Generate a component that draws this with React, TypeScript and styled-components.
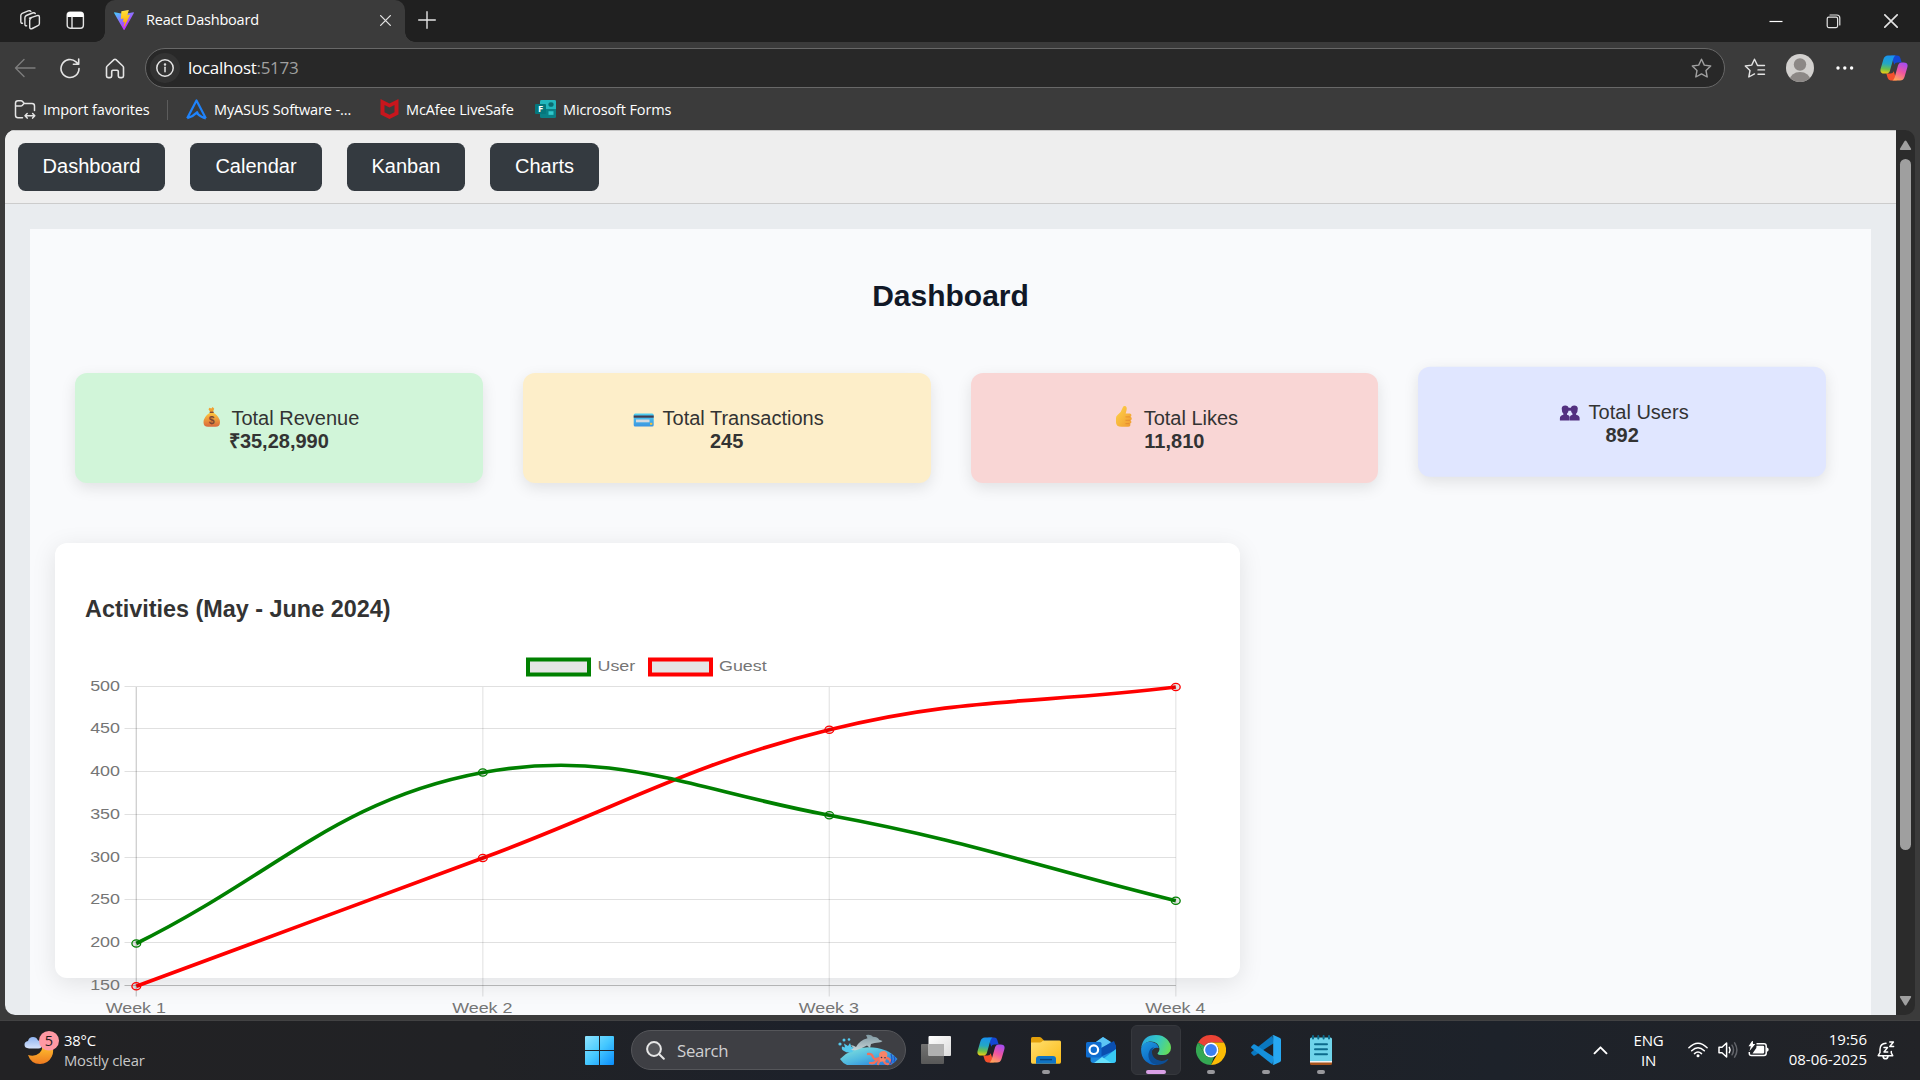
import React from "react";
import styled, { createGlobalStyle } from "styled-components";

const uiFont = `"Segoe UI", "Open Sans", "Noto Sans", sans-serif`;
const pageFont = `Arial, "Liberation Sans", sans-serif`;

const GlobalStyle = createGlobalStyle`
  *, *::before, *::after { box-sizing: border-box; }
  body { margin: 0; background: #3b3b3b; overflow: hidden; }
  svg { display: block; flex: none; }
`;

/* ---------- browser chrome ---------- */

const Screen = styled.div`
  width: 1920px;
  height: 1080px;
  display: flex;
  flex-direction: column;
  background: #3b3b3b;
  overflow: hidden;
  font-family: ${uiFont};
  color: #fff;
`;

const TitleBar = styled.div`
  height: 42px;
  flex: none;
  display: flex;
  background: #202020;
`;

const TitleTools = styled.div`
  width: 105px;
  padding: 10px 0 0 20px;
  display: flex;
  gap: 25px;
`;

const Tab = styled.div`
  position: relative;
  width: 300px;
  padding: 0 14px 2px 9px;
  display: flex;
  align-items: center;
  background: #3b3b3b;
  border-radius: 10px 10px 0 0;

  &::before,
  &::after {
    content: "";
    position: absolute;
    bottom: 0;
    width: 10px;
    height: 10px;
  }
  &::before {
    left: -10px;
    background: radial-gradient(circle at 0 0, transparent 9.5px, #3b3b3b 10px);
  }
  &::after {
    right: -10px;
    background: radial-gradient(circle at 100% 0, transparent 9.5px, #3b3b3b 10px);
  }
`;

const TabTitle = styled.span`
  flex: 1;
  padding-left: 12px;
  font-size: 14.5px;
  line-height: 20px;
  letter-spacing: -0.2px;
  margin-top: -1px;
`;

const NewTab = styled.div`
  padding: 11px 0 0 13px;
`;

const WindowControls = styled.div`
  margin-left: auto;
  padding: 14px 22px 0 0;
  display: flex;
  gap: 43px;
`;

const Toolbar = styled.div`
  height: 52px;
  flex: none;
  display: flex;
  align-items: center;
  padding: 0 12px 0 14px;
`;

const NavIcons = styled.div`
  width: 131px;
  display: flex;
  gap: 24px;
`;

const AddressBar = styled.div`
  width: 1580px;
  height: 40px;
  display: flex;
  align-items: center;
  padding: 0 12px 0 4px;
  background: #282828;
  border: 1.25px solid #686868;
  border-radius: 20px;
`;

const InfoBadge = styled.div`
  width: 30px;
  height: 30px;
  display: grid;
  place-items: center;
  border-radius: 50%;
  background: #333;
`;

const Address = styled.span`
  flex: 1;
  padding-left: 8px;
  font-size: 17px;
  line-height: 24px;
  letter-spacing: -0.3px;
`;

const Port = styled.span`
  color: #a0a0a0;
`;

const ToolbarActions = styled.div`
  flex: 1;
  display: flex;
  align-items: center;
  padding-left: 19px;
  gap: 20px;

  & > :last-child {
    margin-left: auto;
  }
`;

const Bookmarks = styled.div`
  height: 36px;
  flex: none;
  display: flex;
  padding: 3px 0 0 14px;
`;

const Bookmark = styled.div<{ $width: number }>`
  width: ${(p) => p.$width}px;
  height: 24px;
  display: flex;
  align-items: center;
  gap: 7px;
  font-size: 14.5px;
  letter-spacing: -0.13px;
  white-space: nowrap;
`;

const Separator = styled.div`
  width: 1px;
  height: 20px;
  margin: 3px 18px 0 0;
  background: #5c5c5c;
`;

/* ---------- page ---------- */

const Viewport = styled.div`
  height: 885px;
  flex: none;
  margin: 0 5px;
  display: flex;
  border-radius: 10px;
  overflow: hidden;
  background: #2b2b2b;
`;

const Page = styled.div`
  width: 1891px;
  height: 885px;
  overflow: hidden;
  background: #e9ecef;
  color: #333;
  font-family: ${pageFont};
`;

const NavBar = styled.nav`
  height: 74px;
  display: flex;
  gap: 25px;
  padding: 12px 13px;
  background: #eee;
  border-top: 1px solid #c8c8c8;
  border-bottom: 1px solid #ccc;
`;

const NavButton = styled.button<{ $width: number }>`
  width: ${(p) => p.$width}px;
  height: 48px;
  padding: 0 0 1px;
  border: 0;
  border-radius: 7.5px;
  background: #343a40;
  color: #fff;
  font-family: ${pageFont};
  font-size: 20px;
`;

const Panel = styled.main`
  margin: 25px;
  height: 1100px;
  padding: 50px 25px 0;
  background: #f9fafc;
`;

const PageTitle = styled.h1`
  margin: 0 0 60px;
  font-size: 30px;
  line-height: 34px;
  text-align: center;
  color: #111827;
`;

const Stats = styled.section`
  display: grid;
  grid-template-columns: repeat(4, 1fr);
  gap: 40px;
  padding: 0 20px;
  margin-bottom: 60px;
`;

const StatCard = styled.div<{ $tint: string; $raised?: boolean }>`
  height: 110px;
  padding: 30px;
  border-radius: 12px;
  background: ${(p) => p.$tint};
  box-shadow: 0 5px 15px rgba(0, 0, 0, 0.1);
  transform: ${(p) => (p.$raised ? "translateY(-6.25px)" : "none")};
  font-size: 20px;
  line-height: 23px;
  text-align: center;
`;

const StatLabel = styled.div`
  height: 27px;
  display: flex;
  justify-content: center;
  align-items: flex-end;
  gap: 5.5px;

  svg {
    margin-bottom: -2px;
  }
`;

const StatValue = styled.strong`
  display: block;
`;

const ChartCard = styled.section`
  width: 1185px;
  height: 435px;
  padding: 53px 30px 0;
  border-radius: 12px;
  background: #fff;
  box-shadow: 0 5px 25px rgba(0, 0, 0, 0.1);
`;

const ChartTitle = styled.h3`
  margin: 0 0 23px;
  font-size: 23.4px;
  line-height: 26px;
`;

const Scrollbar = styled.div`
  width: 19px;
  height: 885px;
  display: flex;
  flex-direction: column;
  align-items: center;
  padding: 10px 0 9px;
`;

const Thumb = styled.div`
  width: 11px;
  height: 691px;
  margin: 9px 0 auto;
  border-radius: 6px;
  background: #9f9f9f;
`;

/* ---------- taskbar ---------- */

const Taskbar = styled.footer`
  height: 60px;
  flex: none;
  margin-top: auto;
  padding-bottom: 1px;
  display: flex;
  align-items: center;
  border-top: 1px solid #424243;
  background: linear-gradient(90deg, #222224 0%, #212225 25%, #1d212a 42%, #1f2126 60%, #1d222a 78%, #222327 100%);
`;

const Weather = styled.div`
  width: 585px;
  padding-left: 24px;
  display: flex;
  align-items: center;
`;

const WeatherText = styled.div`
  padding-left: 3px;
  margin-top: -1px;
  font-size: 14.8px;
  line-height: 20px;
  letter-spacing: -0.2px;
`;

const Muted = styled.div`
  color: #c8c8c8;
`;

const SearchBox = styled.div`
  width: 275px;
  height: 40px;
  margin: 0 5px 0 17px;
  padding: 0 7px 0 14px;
  display: flex;
  align-items: center;
  border-radius: 20px;
  border: 1px solid #55565a;
  background: #3e3f44;
`;

const SearchText = styled.span`
  flex: 1;
  padding-left: 12px;
  color: #d0d0d2;
  font-size: 16.8px;
  letter-spacing: -0.3px;
`;

const Apps = styled.div`
  display: flex;
  gap: 5px;
`;

const AppSlot = styled.div<{ $active?: boolean }>`
  position: relative;
  width: 50px;
  height: 50px;
  display: grid;
  place-items: center;
  border-radius: 6px;
  border: 1px solid ${(p) => (p.$active ? "#36383d" : "transparent")};
  background: ${(p) => (p.$active ? "#2d2f35" : "transparent")};
`;

const Running = styled.span<{ $active?: boolean }>`
  position: absolute;
  left: 50%;
  bottom: 0;
  width: ${(p) => (p.$active ? 20 : 8)}px;
  height: 4px;
  border-radius: 2px;
  transform: translateX(-50%);
  background: ${(p) => (p.$active ? "#d9a0e6" : "#98989c")};
`;

const Tray = styled.div`
  margin-left: auto;
  padding-right: 25px;
  display: flex;
  align-items: center;
  font-size: 15px;
  line-height: 20px;
`;

const Language = styled.div`
  width: 80px;
  margin-top: -1px;
  padding-left: 1px;
  text-align: center;
  letter-spacing: -0.2px;
`;

const TrayIcons = styled.div`
  display: flex;
  gap: 10px;
  align-items: center;
`;

const Clock = styled.div`
  width: 98px;
  margin: -2px 10px 0 0;
  text-align: right;
`;

/* ---------- icons ---------- */

const line = { fill: "none", stroke: "#e4e4e4", strokeWidth: 1.4, strokeLinecap: "round", strokeLinejoin: "round" } as const;

const WorkspacesIcon = () => (
  <svg width="21" height="20" viewBox="0 0 21 20" {...line}>
    <path d="M9.5 8.2 17 5.6q2.4-.7 2.4 1.7v6.2q0 1.6-1.5 2.2l-5.600 2.8q-2.600 1.100-2.600-1.400v-6.500q0-1.700 1.400-2.400" />
    <path d="M6.600 15.800q-1.700.300-1.700-1.800V7.800q0-1.600 1.400-2.300L12.500 3q2-.800 2.800.600" />
    <path d="M2.500 13.300Q.800 13.500.800 11.500V5.600q0-1.600 1.400-2.300L8.200.900q2-.600 2.700.600" />
  </svg>
);

const TabActionsIcon = () => (
  <svg width="19" height="20" viewBox="0 0 19 20">
    <rect x="1.200" y="2.200" width="16.200" height="16" rx="3" {...line} />
    <path d="M1.200 7V5q0-3 3-3h10.200q3 0 3 3v2z" fill="#fff" />
    <path d="M6 7v11" {...line} />
  </svg>
);

const ViteIcon = () => (
  <svg width="20" height="20" viewBox="0 0 256 257">
    <defs>
      <linearGradient id="vite-a" x1="0" y1="0" x2=".58" y2=".79">
        <stop stopColor="#41d1ff" />
        <stop offset="1" stopColor="#bd34fe" />
      </linearGradient>
      <linearGradient id="vite-b" x1=".43" y1=".02" x2=".5" y2=".89">
        <stop stopColor="#ffea83" />
        <stop offset=".08" stopColor="#ffdd35" />
        <stop offset="1" stopColor="#ffa800" />
      </linearGradient>
    </defs>
    <path fill="url(#vite-a)" d="M255.153 37.938 134.897 252.976c-2.483 4.440-8.862 4.466-11.382.048L.875 37.958c-2.746-4.814 1.371-10.646 6.827-9.670l120.385 21.517a6.537 6.537 0 0 0 2.322-.004l117.867-21.483c5.438-.991 9.574 4.796 6.877 9.620Z" />
    <path fill="url(#vite-b)" d="M185.432.063 96.440 17.501a3.268 3.268 0 0 0-2.634 3.014l-5.474 92.456a3.268 3.268 0 0 0 3.997 3.378l24.777-5.718c2.318-.535 4.413 1.507 3.936 3.838l-7.361 36.047c-.495 2.426 1.782 4.500 4.151 3.780l15.304-4.649c2.372-.720 4.652 1.360 4.150 3.788l-11.698 56.621c-.732 3.542 3.979 5.473 5.943 2.437l1.313-2.028 72.516-144.720c1.215-2.423-.880-5.186-3.540-4.672l-25.505 4.922c-2.396.462-4.435-1.770-3.759-4.114l16.646-57.705c.677-2.350-1.370-4.583-3.769-4.113Z" />
  </svg>
);

const CloseIcon = ({ size = 11 }: { size?: number }) => (
  <svg width={size} height={size} viewBox="0 0 12 12" {...line}>
    <path d="M.7.7 11.300 11.300M11.300.7.7 11.300" />
  </svg>
);

const PlusIcon = () => (
  <svg width="18" height="18" viewBox="0 0 18 18" {...line}>
    <path d="M9 .7v16.600M.7 9h16.600" />
  </svg>
);

const MinimizeIcon = () => (
  <svg width="14" height="15" viewBox="0 0 14 15">
    <path d="M.5 7.500h13" stroke="#fff" strokeWidth="1.200" />
  </svg>
);

const RestoreIcon = () => (
  <svg width="15" height="15" viewBox="0 0 15 15" {...line} strokeWidth="1.200">
    <rect x="1.200" y="3.200" width="10.400" height="10.400" rx="1.500" />
    <path d="M4 1h6.800q3 0 3 3v7" />
  </svg>
);

const BackIcon = () => (
  <svg width="22" height="20" viewBox="0 0 22 20" {...line} stroke="#7d7d7d">
    <path d="M21 10H1.500M10 1.500 1.500 10l8.500 8.500" />
  </svg>
);

const ReloadIcon = () => (
  <svg width="21" height="21" viewBox="0.5 0 21 21" {...line} strokeWidth="1.600">
    <path d="M19.500 10.500a9 9 0 1 1-3-6.700l2.500 2.400M19.200 1v5.300h-5.300" />
  </svg>
);

const HomeIcon = () => (
  <svg width="20" height="21" viewBox="0 0 20 21" {...line} strokeWidth="1.600">
    <path d="M1.500 9.500q0-.9.700-1.500L9 1.700q1-.9 2 0L17.800 8q.7.600.7 1.500V18q0 1.600-1.600 1.600h-2q-1.600 0-1.600-1.600v-4.500q0-1.200-1.200-1.200H7.900q-1.200 0-1.200 1.200V18q0 1.600-1.600 1.600h-2Q1.500 19.600 1.500 18z" />
  </svg>
);

const InfoIcon = () => (
  <svg width="18" height="18" viewBox="0 0 18 18" {...line} strokeWidth="1.500">
    <circle cx="9" cy="9" r="8.200" />
    <path d="M9 8.300v4.400" />
    <circle cx="9" cy="5.500" r=".5" fill="#fff" />
  </svg>
);

const StarIcon = () => (
  <svg width="21" height="21" viewBox="0 0 21 21" {...line} stroke="#a0a0a0">
    <path d="m10.500 1.200 2.800 5.900 6.400.9-4.700 4.500 1.200 6.500-5.700-3.100L4.800 19 6 12.500 1.300 8l6.400-.9z" />
  </svg>
);

const FavoritesIcon = () => (
  <svg width="22" height="21" viewBox="0 0 22 21" {...line}>
    <path d="M20.500 7.500h-7L10.500 1.200 7.700 7.100l-6.400.9L6 12.500 4.800 19l5.700-3.100M14 11.900h6.500M14 16.200h6.500" />
  </svg>
);

const Avatar = () => (
  <svg width="28" height="28" viewBox="0 0 28 28">
    <defs>
      <clipPath id="avatar-clip"><circle cx="14" cy="14" r="14" /></clipPath>
    </defs>
    <g clipPath="url(#avatar-clip)">
      <path fill="#d2d0ce" d="M0 0h28v28H0z" />
      <circle cx="14" cy="10.500" r="6.200" fill="#8c8886" />
      <ellipse cx="14" cy="26.500" rx="10.500" ry="8.500" fill="#8c8886" />
    </g>
  </svg>
);

const MoreIcon = () => (
  <svg width="22" height="6" viewBox="-2 0 22 6" fill="#fff">
    <circle cx="2" cy="3" r="1.700" /><circle cx="8.800" cy="3" r="1.700" /><circle cx="15.600" cy="3" r="1.700" />
  </svg>
);

const CopilotIcon = ({ id }: { id: string }) => (
  <svg width="28" height="26" viewBox="0 0 30 28">
    <defs>
      <linearGradient id={`${id}-a`} x1=".4" y1="0" x2=".3" y2="1">
        <stop stopColor="#1893f0" />
        <stop offset=".45" stopColor="#24a7c4" />
        <stop offset=".75" stopColor="#6cc04a" />
        <stop offset="1" stopColor="#f5cf12" />
      </linearGradient>
      <linearGradient id={`${id}-b`} x1=".7" y1="0" x2=".3" y2="1">
        <stop stopColor="#a54cf0" />
        <stop offset=".5" stopColor="#f0559f" />
        <stop offset="1" stopColor="#ffa55c" />
      </linearGradient>
    </defs>
    <path fill="#1447d4" d="M12 .5h6.500q2.500 0 3.300 2.600L23.300 8H18.500q-2.400 0-3.200 2.400z" />
    <path fill="#f4512d" d="M18 27.500h-6.500q-2.500 0-3.300-2.600L6.700 20h4.800q2.400 0 3.200-2.400z" />
    <path fill={`url(#${id}-a)`} d="M8.500.5h8.300q-1.700.500-2.400 3l-3.700 13.100Q9.700 20 6.500 20H4.600Q-.800 20 .7 14.500L3.700 4.300Q4.900.5 8.500.5z" />
    <path fill={`url(#${id}-b)`} d="M21.500 27.500h-8.300q1.700-.500 2.400-3l3.700-13.100Q20.300 8 23.500 8h1.900q5.400 0 3.900 5.500l-3 10.200Q25.100 27.500 21.500 27.500z" />
  </svg>
);

const ImportIcon = () => (
  <svg width="22" height="21" viewBox="0 0 22 21" {...line} strokeWidth="1.500">
    <path d="M8.500 18.700H4q-2.500 0-2.500-2.500V4.300q0-2.500 2.500-2.500h3q1 0 1.600.700l1.700 2H18q2.500 0 2.500 2.500v4.500M1.500 7h5.200q1 0 1.700-.800l1.600-1.700" />
    <path d="M11 16.800h9.800M13.200 14.500 11 16.800l2.200 2.300M18.600 14.500l2.200 2.300-2.200 2.300" />
  </svg>
);

const AsusIcon = () => (
  <svg width="21" height="21" viewBox="0 0 21 21">
    <path d="M1.200 19.300 10.500 1.500l9.300 17.800M1.200 19.300q5.800-1.800 10.800-6.700M19.800 19.300q-4.500-.800-9.500-5.700" fill="none" stroke="#1f83fb" strokeWidth="2.200" strokeLinejoin="round" />
  </svg>
);

const McAfeeIcon = () => (
  <svg width="20" height="20" viewBox="-1 0 20 20">
    <path fill="#c8161d" d="M.5 0 9.500 4.500 18.500 0v15.500L9.500 20l-9-4.500zM4.500 6v7.200l5 2.600 5-2.600V6l-5 2.600z" />
  </svg>
);

const FormsIcon = () => (
  <svg width="21" height="18" viewBox="0 0 21 20" preserveAspectRatio="none">
    <path fill="#23b7bd" d="M5 1.500Q5 0 6.500 0h13Q21 0 21 1.500V10H5z" />
    <path fill="#0a8086" d="M5 10h16v8.500q0 1.500-1.500 1.500h-13Q5 20 5 18.500z" />
    <circle cx="16" cy="5" r="2.600" fill="#0a6c70" /><path fill="#31c8cc" d="M13.500 12.500h5v4h-5z" />
    <rect y="4.500" width="11" height="11" rx="1" fill="#05777c" />
    <text x="5.500" y="13.400" fontSize="9.500" fontWeight="700" fill="#fff" textAnchor="middle" fontFamily="Open Sans, sans-serif">F</text>
  </svg>
);

/* stat icons share a 27.5px advance so that labels align the way emoji do */
const MoneyBag = () => (
  <svg width="27.500" height="27" viewBox="0 0 27.500 27">
    <defs>
      <linearGradient id="bag" x1="0" y1="0" x2="0" y2="1">
        <stop stopColor="#ffc83d" /><stop offset="1" stopColor="#d9683c" />
      </linearGradient>
    </defs>
    <path fill="#f0a030" d="m10.500 4.300 1-1.500 1.800.700L14.700 2l1.500 1.800-1.300 3.200h-2.600z" />
    <path fill="url(#bag)" d="M12 7.500h3.300q6.700 4.500 6.700 9.800 0 4.500-4.500 4.500h-7.500q-4.500 0-4.500-4.500 0-5.300 6.500-9.800z" />
    <path stroke="#7d4533" strokeWidth="1.300" d="M11.700 7.300h4" />
    <text x="13.700" y="18.800" fontSize="10.500" fontWeight="700" textAnchor="middle" fill="#7d4533">$</text>
  </svg>
);

const CreditCard = () => (
  <svg width="27.500" height="27" viewBox="0 0 27.500 27">
    <defs>
      <linearGradient id="card" x1="0" y1="0" x2="0" y2="1">
        <stop stopColor="#4fd0f2" /><stop offset="1" stopColor="#3a93e0" />
      </linearGradient>
    </defs>
    <rect x="3.700" y="8.500" width="20" height="13" rx="1.500" fill="url(#card)" />
    <path fill="#433b4f" d="M3.700 10.500h20v2.200h-20z" />
    <path fill="#d5d9e0" d="M6 14.500h13.500v2.800H6z" />
    <path fill="#f3c13a" d="M20 17.800h2.300v2H20z" />
  </svg>
);

const ThumbsUp = () => (
  <svg width="27.500" height="27" viewBox="1 0.5 27.500 27">
    <defs>
      <linearGradient id="thumb" x1="0" y1="0" x2="1" y2="1">
        <stop stopColor="#ffd54a" /><stop offset="1" stopColor="#f09a30" />
      </linearGradient>
    </defs>
    <path fill="url(#thumb)" d="M6 13.500q0-1.700 1.800-3.200 3.700-3 4.600-6.600.6-2.200 2.300-2.100 2.600.3 1.900 4l-.9 3.400h4.100q1.600.1 1.600 1.600t-1 1.700q1.500.4 1.400 1.900-.1 1.400-1.400 1.700 1.200.5 1 1.800-.200 1.300-1.500 1.500.8.500.5 1.500-.5 1.600-2.400 1.600h-6.500Q6 22.300 6 17.700z" />
    <path stroke="#e0822e" strokeWidth=".7" fill="none" d="M15.500 12.400h4.800M15.500 15.800h4.800M15.500 19.100h4" />
  </svg>
);

const Users = () => (
  <svg width="27.500" height="27" viewBox="0 -0.5 27.500 27" fill="#533080">
    <path d="M5.700 9.200q.2-2.900 3.500-2.900t3.500 2.900q0 3.800-1.700 5.200v1q2.400.4 2.600 2.200v3.700H3.900v-2.500q0-2.800 3.500-3.400v-1Q5.700 13 5.700 9.200zM14.800 9.200q.2-2.900 3.500-2.900t3.500 2.900q0 3.800-1.700 5.200v1q3.500.6 3.500 3.400v2.500h-9.700v-3.700q.2-1.800 2.600-2.200v-1q-1.700-1.400-1.700-5.200z" />
    <path d="M12 8.500h3.400v3H12z" />
  </svg>
);

const ArrowUp = () => (
  <svg width="13" height="10" viewBox="0 0 13 10"><path fill="#9f9f9f" d="M.8 9 5.600 1q.9-1 1.800 0l4.800 8q0 .9-.9.900H1.700Q.8 9.900.8 9z" /></svg>
);

const ArrowDown = () => (
  <svg width="13" height="10" viewBox="0 0 13 10"><path fill="#9f9f9f" d="M.8 1 5.600 9q.9 1 1.800 0l4.800-8q0-.9-.9-.900H1.700Q.8.100.8 1z" /></svg>
);

const WeatherIcon = () => (
  <svg width="37" height="38" viewBox="0 0 37 38">
    <defs>
      <linearGradient id="moon" x1="0" y1="0" x2="0" y2="1">
        <stop stopColor="#ffc02e" /><stop offset="1" stopColor="#ee7a20" />
      </linearGradient>
      <linearGradient id="cloud" x1="0" y1="0" x2="0" y2="1">
        <stop stopColor="#8fb4f0" /><stop offset="1" stopColor="#d6e2fa" />
      </linearGradient>
    </defs>
    <path fill="url(#moon)" d="M4 24q7 2 11.500-2 3-3 3-7L28 15q2.500 5.500-.3 10.800Q24 33 16 33 7 33 4 24z" />
    <path fill="url(#cloud)" d="M5 17.500q-4.500-.3-4.500-3.700 0-3.200 3.500-3.700Q5 6 9 6q3.500 0 5 3.400 4 0 4 4 0 4.100-3.500 4.100z" />
    <ellipse cx="25" cy="9.800" rx="10" ry="9.800" fill="#ff99a4" />
    <text x="25" y="15" fontSize="14.500" textAnchor="middle" fill="#1c1c1c" fontFamily="Open Sans, sans-serif">5</text>
  </svg>
);

const WindowsLogo = () => (
  <svg width="29" height="29" viewBox="0 0 29 29">
    <defs>
      <linearGradient id="win" gradientUnits="userSpaceOnUse" x1="0" y1="0" x2="29" y2="29">
        <stop stopColor="#8fe4ff" /><stop offset=".5" stopColor="#45c8ff" /><stop offset="1" stopColor="#0a8cfb" />
      </linearGradient>
    </defs>
    <path fill="url(#win)" d="M1 0h13v14H0V1q0-1 1-1zM15 0h13q1 0 1 1v13H15zM0 15h14v14H1q-1 0-1-1zM15 15h14v13q0 1-1 1H15z" />
  </svg>
);

const SearchIcon = () => (
  <svg width="19" height="19" viewBox="0 0 19 19" fill="none" stroke="#e6e6e6" strokeWidth="2" strokeLinecap="round">
    <circle cx="8" cy="8" r="6.900" fill="#55565a" /><path d="m13 13 4.800 4.800" />
  </svg>
);

const DolphinArt = () => (
  <svg width="60" height="32" viewBox="0 0 60 32">
    <defs>
      <linearGradient id="sea" x1="0" y1="0" x2="1" y2="1">
        <stop stopColor="#8ae8dc" /><stop offset=".5" stopColor="#4fb8e0" /><stop offset="1" stopColor="#1d6fdc" />
      </linearGradient>
      <linearGradient id="dolphin" x1="0" y1="0" x2="0" y2="1">
        <stop stopColor="#7f97a0" /><stop offset="1" stopColor="#c4d2d6" />
      </linearGradient>
    </defs>
    <path fill="url(#sea)" d="M2 25Q13 13.500 30 13.200 49 13 59.500 25q-2.500 3.800-6.500 6H9q-4.500-2-7-6z" />
    <path fill="#54c8ec" d="M6 17q-3-1.500-2-4.500l3 1-1-4 4 2.500L12 9l1.500 4 3 .5-2 4.500q-5 1.500-8.500-1z" />
    <circle cx="2" cy="10" r="1.600" fill="#54c8ec" /><circle cx="6" cy="6" r="1.500" fill="#54c8ec" /><circle cx="11" cy="5.500" r="1.300" fill="#54c8ec" />
    <path fill="url(#dolphin)" d="M13 11q3 .3 5 2 3.500-6.500 11.500-8.700L28 1q5-1 7 1.800 4.700.2 6.200 3l3.300 1.200q-1 1.500-4 1.400-4 .1-7.500 1.600l-1 4-3-2.600q-5.500 3-10.500 4.600-3 .8-5.500-.300 2-1 2.700-1.900Q13.500 12.500 13 11z" />
    <path fill="none" stroke="#f2705c" strokeWidth="2.300" strokeLinecap="round" d="M30 20q4-.5 5 3t6 1M32 29q4 1 6-2t5-1M40 30q1-4 4-4M46 26q0 4 4 4M48 24q4 0 5 5" />
    <path fill="#f98468" d="M41 20q1.500-3.500 5.500-3 4 1.500 2.500 5.500l-2 5h-5z" />
    <circle cx="43.500" cy="23.500" r=".8" fill="#31324a" /><circle cx="47" cy="23.800" r=".8" fill="#31324a" />
    <path fill="none" stroke="#1f54c8" strokeWidth="1.300" d="M53 20q2 5-.5 10M56 22q1.500 3 0 6" />
  </svg>
);

const TaskViewIcon = () => (
  <svg width="30" height="30" viewBox="0 0 30 30">
    <defs>
      <linearGradient id="tv" x1="0" y1="0" x2="1" y2="1"><stop stopColor="#fff" /><stop offset="1" stopColor="#dcdcdc" /></linearGradient>
      <linearGradient id="tv2" x1="0" y1="0" x2="0" y2="1"><stop stopColor="#727272" /><stop offset="1" stopColor="#585858" /></linearGradient>
    </defs>
    <rect y="9" width="23" height="20" rx="1" fill="url(#tv2)" />
    <rect x="7.500" y="1" width="22.500" height="20" rx="1" fill="url(#tv)" />
    <path fill="#b1b1b1" d="M7.500 9H23v12H8.500q-1 0-1-1z" />
  </svg>
);

const ExplorerIcon = () => (
  <svg width="30" height="30" viewBox="0 0 30 30">
    <defs>
      <linearGradient id="fold" x1="0" y1="0" x2="1" y2="1"><stop stopColor="#ffdf70" /><stop offset="1" stopColor="#fbbb16" /></linearGradient>
    </defs>
    <path fill="#e2a00b" d="M0 3.500Q0 2 1.500 2h7q1 0 1.800.8L13 5.500 10 12H0z" />
    <path fill="url(#fold)" d="M0 7.500h9q1 0 1.800-.8l.700-.700q.7-.6 1.500-.6h15.500Q30 5.400 30 7v20q0 1.700-1.500 1.700h-27Q0 28.700 0 27z" />
    <path fill="#1074c4" d="M5 28.700V24q0-3 3-3h14q3 0 3 3v4.700z" />
    <path stroke="#08437c" strokeWidth="1.400" d="M9 24.600h12" />
  </svg>
);

const OutlookIcon = () => (
  <svg width="30" height="30" viewBox="0 0 30 30">
    <path fill="#1b87dc" d="M4.500 11 17 2l13 9v14q0 3-3 3H7.500q-3 0-3-3z" />
    <path fill="#5bc5f5" d="m7 9 10-7 8 5-14 10z" />
    <path fill="#0a4fb0" d="m15 13 13-7 2 5v4L14 22z" />
    <path fill="#38c9f4" d="M30 14v11q0 3-3 3H12z" />
    <path fill="#67e0fb" d="M8 28h19q-2 0-4-1.500L16 22z" />
    <rect y="7" width="15.500" height="15.500" rx="1.500" fill="#0f6cce" />
    <circle cx="7.800" cy="14.700" r="4.300" fill="none" stroke="#fff" strokeWidth="2.200" />
  </svg>
);

const EdgeIcon = () => (
  <svg width="30" height="30" viewBox="0 0 30 30">
    <defs>
      <linearGradient id="eg1" x1="0" y1=".3" x2="1" y2=".6"><stop stopColor="#2aa9e0" /><stop offset=".5" stopColor="#34c8c4" /><stop offset="1" stopColor="#66dd58" /></linearGradient>
      <linearGradient id="eg2" x1="0" y1="0" x2=".5" y2="1"><stop stopColor="#1f9be2" /><stop offset="1" stopColor="#0a63c0" /></linearGradient>
    </defs>
    <path fill="url(#eg1)" d="M.2 13Q1.800 0 15 0q7 0 11 4.300 4 4.200 4 8.700 0 3.500-2.600 5.500T21 20q-4 0-4.500-1.500 2-2 2-4.500 0-3-2.500-5.500-3-2.500-7.500-2Q3 7.500.200 13z" />
    <path fill="url(#eg2)" d="M.2 13Q2.500 7 8.500 6.700q5 0 7.500 2.800 1.800 2 1.800 3.500-4.500-1.200-6.500 2-2.500 4-.5 9t7.500 6Q10 31 4.700 26.200-.5 21.500.200 13z" />
    <path fill="#0c4e96" d="M12 13.500q-1.200 1.800-1 4.500.7 4.700 5 6.800 5.500 2.500 10.700-.8.800-.3.600.6Q23.500 30 16 30q-5.500-.8-7.700-5.500Q6 18.500 9.500 14q1.500-1.500 3.500-1.800z" />
  </svg>
);

const ChromeIcon = () => (
  <svg width="30" height="30" viewBox="0 0 30 30">
    <path fill="#ea4335" d="M2 7.500A15 15 0 0 1 28 7.500H15A7.500 7.500 0 0 0 8.500 11.250z" />
    <path fill="#34a853" d="M15 30A15 15 0 0 1 2 7.500L8.500 18.750A7.500 7.500 0 0 0 15 22.500l3-.6z" />
    <path fill="#fbbc05" d="M28 7.500A15 15 0 0 1 15 30L21.500 18.750A7.500 7.500 0 0 0 21.500 11.250L15 7.500z" />
    <path fill="#34a853" d="m2 7.500 6.500 11.250 1-1L8.500 11z" />
    <circle cx="15" cy="15" r="7.500" fill="#fff" /><circle cx="15" cy="15" r="5.900" fill="#3b7ff2" />
  </svg>
);

const VsCodeIcon = () => (
  <svg width="30" height="30" viewBox="0 0 30 30">
    <path fill="#0a78c0" d="M1.300 19.500.4 18.500q-.7-.8.100-1.600L21.400.500 23 8 4 20.500q-1 .4-1.700-.1z" />
    <path fill="#1590dc" d="M1.300 10.500.4 11.500q-.7.800.100 1.600L21.400 29.500 23 22 4 9.500q-1-.4-1.700.1z" />
    <path fill="#27a8f2" d="M21.300.400q.8-.6 1.700-.200l6 2.900q1 .5 1 1.600v20.600q0 1.100-1 1.600l-6 2.900q-.9.400-1.700-.2.900.4.900-.7V1.100q0-1.100-.9-.7z" />
  </svg>
);

const NotepadIcon = () => (
  <svg width="22" height="30" viewBox="0 0 22 30">
    <path fill="#a8541c" d="M0 26h22v2.500q0 1.500-1.500 1.500h-19Q0 30 0 28.500z" />
    <path fill="#f2f2f2" d="M0 25h22v2.500H0z" />
    <path fill="#6fd4ea" d="M0 4q0-1.500 1.500-1.500h19Q22 2.500 22 4v22H0z" />
    <path stroke="#0c6b8c" strokeWidth="2" strokeLinecap="round" d="M3 1v2.500M8.300 1v2.500M13.600 1v2.500M19 1v2.500M5 9.300h12M5 14.200h12M5 19.200h12" />
  </svg>
);

const ChevronUp = () => (
  <svg width="15" height="10" viewBox="0 0 15 10"><path d="m1.500 8.300 6-6 6 6" fill="none" stroke="#fff" strokeWidth="1.900" strokeLinecap="round" strokeLinejoin="round" /></svg>
);

const WifiIcon = () => (
  <svg width="20" height="16" viewBox="0 0 20 16" fill="none" stroke="#fff" strokeWidth="1.500" strokeLinecap="round">
    <path d="M.9 5.800Q10-3.500 19.100 5.800M3.700 8.700q6.300-6 12.600 0M6.500 11.600q3.500-3.300 7 0" /><circle cx="10" cy="13.700" r="1.500" fill="#fff" stroke="none" />
  </svg>
);

const SpeakerIcon = () => (
  <svg width="20" height="18" viewBox="0 0 20 18" fill="none" stroke="#fff" strokeWidth="1.500" strokeLinecap="round" strokeLinejoin="round">
    <path d="M1 6.200h3L8.600 2v14L4 11.800H1zM11.300 6.300q1.600 2.700 0 5.400" />
    <path d="M14 4.200q3 4.800 0 9.600M16.600 1.800q4.600 7.200 0 14.400" stroke="#62646a" />
  </svg>
);

const BatteryIcon = () => (
  <svg width="21" height="18" viewBox="0 1 21 18">
    <path d="M8.500 3.700H16q2.200 0 2.200 2.200v7.400q0 2.200-2.200 2.200H3.500q-2.200 0-2.200-2.200V12" fill="none" stroke="#fff" strokeWidth="1.500" />
    <path fill="#fff" d="M8.500 5.700H15q1.200 0 1.200 1.200v5.400q0 1.200-1.200 1.200H4.500L8.300 8zM19 7.400q1.700.3 1.700 2.200T19 11.800zM4.800 0 .500 6.300h2.300L1.500 11l5.800-7H5z" />
  </svg>
);

const BellIcon = () => (
  <svg width="18" height="19" viewBox="0 0 18 19" fill="none" stroke="#fff" strokeWidth="1.500" strokeLinecap="round" strokeLinejoin="round">
    <path d="M9 2.300Q3.200 2.500 3 8.200v3.300L1.200 14.700h14.500L14.300 12v-1.500M6 15.500q.5 2.300 2.500 2.300t2.500-2.300" />
    <path d="M7 6.600h3.500L7 11h3.700M12.800 1h3.600l-3.600 4.500h3.800" />
  </svg>
);

/* ---------- chart ---------- */

type Point = [number, number];

const weeks = ["Week 1", "Week 2", "Week 3", "Week 4"];
const levels = [500, 450, 400, 350, 300, 250, 200, 150];
const series = [
  { name: "Guest", color: "#ff0000", values: [150, 300, 450, 500] },
  { name: "User", color: "#008000", values: [200, 400, 350, 250] },
];

const xAt = (i: number) => 51.300 + i * 346.500;
const yAt = (v: number) => 42 + ((500 - v) / 50) * 42.750;

/* cardinal spline with tension split by the distance to each neighbour */
function splinePath(values: number[], tension = 0.4) {
  const pts: Point[] = values.map((v, i) => [xAt(i), yAt(v)]);
  const dist = (a: Point, b: Point) => Math.hypot(a[0] - b[0], a[1] - b[1]);
  const handles = pts.map((p, i) => {
    const prev = pts[Math.max(0, i - 1)];
    const next = pts[Math.min(pts.length - 1, i + 1)];
    const before = dist(prev, p);
    const after = dist(p, next);
    const a = (tension * before) / (before + after);
    const b = (tension * after) / (before + after);
    const dx = next[0] - prev[0];
    const dy = next[1] - prev[1];
    return { in: [p[0] - a * dx, p[1] - a * dy], out: [p[0] + b * dx, p[1] + b * dy] };
  });
  return pts
    .map((p, i) => (i === 0 ? `M${p}` : `C${handles[i - 1].out} ${handles[i].in} ${p}`))
    .join(" ");
}

const ChartSvg = styled.svg`
  font-family: ${pageFont};
  font-size: 14.8px;
  fill: #757575;
`;

const ChartText = ({ x, y, anchor = "start", children }: { x: number; y: number; anchor?: "start" | "middle" | "end"; children: React.ReactNode }) => (
  <text transform={`translate(${x} ${y}) scale(1.21 1)`} textAnchor={anchor}>{children}</text>
);

const ActivityChart = () => (
  <ChartSvg width="1125" height="400" viewBox="0 0 1125 400">
    <rect x="443" y="14.500" width="61" height="15" fill="#e5e5e5" stroke="#008000" strokeWidth="4" />
    <ChartText x={512.500} y={26}>User</ChartText>
    <rect x="565" y="14.500" width="61" height="15" fill="#e5e5e5" stroke="#ff0000" strokeWidth="4" />
    <ChartText x={634} y={26}>Guest</ChartText>
    {levels.map((v) => (
      <g key={v}>
        <path d={`M39.500 ${Math.floor(yAt(v)) - 0.500}H${xAt(3)}`} stroke="#000" strokeOpacity={v === 150 ? 0.25 : 0.12} strokeWidth="1.200" />
        <ChartText x={35} y={yAt(v) + 3.700} anchor="end">{v}</ChartText>
      </g>
    ))}
    {weeks.map((w, i) => (
      <g key={w}>
        <path d={`M${xAt(i)} 42V351.500`} stroke="#000" strokeOpacity={i === 0 ? 0.18 : 0.09} strokeWidth="1.400" />
        <ChartText x={xAt(i) - 0.500} y={367.500} anchor="middle">{w}</ChartText>
      </g>
    ))}
    {series.map((s) => (
      <g key={s.name} stroke={s.color}>
        <path d={splinePath(s.values)} fill="none" strokeWidth="3.700" />
        {s.values.map((v, i) => (
          <ellipse key={i} cx={xAt(i)} cy={yAt(v)} rx="4.400" ry="3.700" fill="#000" fillOpacity=".1" strokeWidth="1.300" />
        ))}
      </g>
    ))}
  </ChartSvg>
);

/* ---------- app ---------- */

const pages = [
  { name: "Dashboard", width: 147 },
  { name: "Calendar", width: 132 },
  { name: "Kanban", width: 118 },
  { name: "Charts", width: 109 },
];

const stats = [
  { label: "Total Revenue", value: "₹35,28,990", tint: "#d1f5d9", icon: <MoneyBag /> },
  { label: "Total Transactions", value: "245", tint: "#fdeec9", icon: <CreditCard /> },
  { label: "Total Likes", value: "11,810", tint: "#f9d6d5", icon: <ThumbsUp /> },
  { label: "Total Users", value: "892", tint: "#e0e6ff", icon: <Users />, raised: true },
];

const apps = [
  { icon: <TaskViewIcon /> },
  { icon: <CopilotIcon id="cop-task" /> },
  { icon: <ExplorerIcon />, running: true },
  { icon: <OutlookIcon /> },
  { icon: <EdgeIcon />, running: true, active: true },
  { icon: <ChromeIcon />, running: true },
  { icon: <VsCodeIcon />, running: true },
  { icon: <NotepadIcon />, running: true },
];

export default function App() {
  return (
    <Screen>
      <GlobalStyle />
      <TitleBar>
        <TitleTools><WorkspacesIcon /><TabActionsIcon /></TitleTools>
        <Tab><ViteIcon /><TabTitle>React Dashboard</TabTitle><CloseIcon /></Tab>
        <NewTab><PlusIcon /></NewTab>
        <WindowControls><MinimizeIcon /><RestoreIcon /><CloseIcon size={14} /></WindowControls>
      </TitleBar>
      <Toolbar>
        <NavIcons><BackIcon /><ReloadIcon /><HomeIcon /></NavIcons>
        <AddressBar>
          <InfoBadge><InfoIcon /></InfoBadge>
          <Address>localhost<Port>:5173</Port></Address>
          <StarIcon />
        </AddressBar>
        <ToolbarActions><FavoritesIcon /><Avatar /><MoreIcon /><CopilotIcon id="cop-bar" /></ToolbarActions>
      </Toolbar>
      <Bookmarks>
        <Bookmark $width={153}><ImportIcon />Import favorites</Bookmark>
        <Separator />
        <Bookmark $width={193}><AsusIcon />MyASUS Software -...</Bookmark>
        <Bookmark $width={156}><McAfeeIcon />McAfee LiveSafe</Bookmark>
        <Bookmark $width={160}><FormsIcon />Microsoft Forms</Bookmark>
      </Bookmarks>
      <Viewport>
        <Page>
          <NavBar>
            {pages.map((p) => <NavButton key={p.name} $width={p.width}>{p.name}</NavButton>)}
          </NavBar>
          <Panel>
            <PageTitle>Dashboard</PageTitle>
            <Stats>
              {stats.map((s) => (
                <StatCard key={s.label} $tint={s.tint} $raised={s.raised}>
                  <StatLabel>{s.icon}<span>{s.label}</span></StatLabel>
                  <StatValue>{s.value}</StatValue>
                </StatCard>
              ))}
            </Stats>
            <ChartCard>
              <ChartTitle>Activities (May - June 2024)</ChartTitle>
              <ActivityChart />
            </ChartCard>
          </Panel>
        </Page>
        <Scrollbar><ArrowUp /><Thumb /><ArrowDown /></Scrollbar>
      </Viewport>
      <Taskbar>
        <Weather>
          <WeatherIcon />
          <WeatherText><div>38°C</div><Muted>Mostly clear</Muted></WeatherText>
        </Weather>
        <WindowsLogo />
        <SearchBox><SearchIcon /><SearchText>Search</SearchText><DolphinArt /></SearchBox>
        <Apps>
          {apps.map((a, i) => (
            <AppSlot key={i} $active={a.active}>
              {a.icon}
              {a.running && <Running $active={a.active} />}
            </AppSlot>
          ))}
        </Apps>
        <Tray>
          <ChevronUp />
          <Language>ENG<br />IN</Language>
          <TrayIcons><WifiIcon /><SpeakerIcon /><BatteryIcon /></TrayIcons>
          <Clock>19:56<br />08-06-2025</Clock>
          <BellIcon />
        </Tray>
      </Taskbar>
    </Screen>
  );
}
